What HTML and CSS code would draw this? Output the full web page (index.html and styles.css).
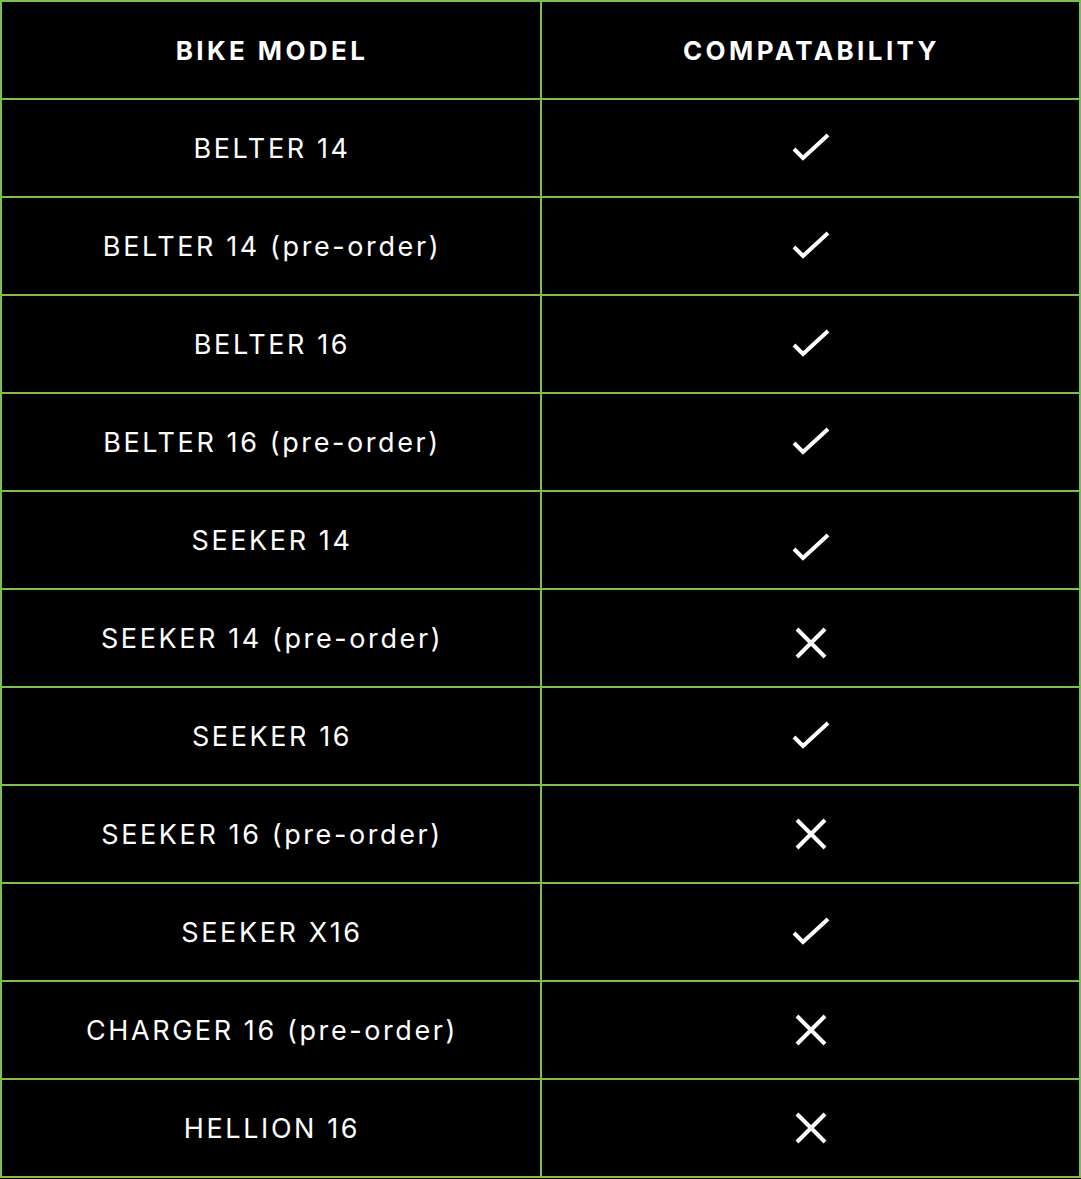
FILE: index.html
```html
<!DOCTYPE html>
<html lang="en">
<head>
<meta charset="utf-8">
<title>Bike compatibility</title>
<link rel="stylesheet" href="styles.css">
</head>
<body>
<div class="table">
  <div class="cell head">BIKE MODEL</div>
  <div class="cell head">COMPATABILITY</div>

  <div class="cell">BELTER 14</div>
  <div class="cell"><svg class="icon check" viewBox="0 0 38 30"><polyline points="2,16 11,25 36,2"/></svg></div>

  <div class="cell">BELTER 14 (pre-order)</div>
  <div class="cell"><svg class="icon check" viewBox="0 0 38 30"><polyline points="2,16 11,25 36,2"/></svg></div>

  <div class="cell">BELTER 16</div>
  <div class="cell"><svg class="icon check" viewBox="0 0 38 30"><polyline points="2,16 11,25 36,2"/></svg></div>

  <div class="cell">BELTER 16 (pre-order)</div>
  <div class="cell"><svg class="icon check" viewBox="0 0 38 30"><polyline points="2,16 11,25 36,2"/></svg></div>

  <div class="cell">SEEKER 14</div>
  <div class="cell"><svg class="icon check low" viewBox="0 0 38 30"><polyline points="2,16 11,25 36,2"/></svg></div>

  <div class="cell">SEEKER 14 (pre-order)</div>
  <div class="cell"><svg class="icon cross low-x" viewBox="0 0 32 32"><path d="M2 2L30 30M30 2L2 30"/></svg></div>

  <div class="cell">SEEKER 16</div>
  <div class="cell"><svg class="icon check" viewBox="0 0 38 30"><polyline points="2,16 11,25 36,2"/></svg></div>

  <div class="cell">SEEKER 16 (pre-order)</div>
  <div class="cell"><svg class="icon cross" viewBox="0 0 32 32"><path d="M2 2L30 30M30 2L2 30"/></svg></div>

  <div class="cell">SEEKER X16</div>
  <div class="cell"><svg class="icon check" viewBox="0 0 38 30"><polyline points="2,16 11,25 36,2"/></svg></div>

  <div class="cell">CHARGER 16 (pre-order)</div>
  <div class="cell"><svg class="icon cross" viewBox="0 0 32 32"><path d="M2 2L30 30M30 2L2 30"/></svg></div>

  <div class="cell">HELLION 16</div>
  <div class="cell"><svg class="icon cross" viewBox="0 0 32 32"><path d="M2 2L30 30M30 2L2 30"/></svg></div>
</div>
</body>
</html>
```
FILE: styles.css
```css
html, body {
  margin: 0;
  padding: 0;
  background: #000;
}

.table {
  display: grid;
  grid-template-columns: 538px 537px;
  grid-auto-rows: 96px;
  gap: 2px;
  padding: 2px;
  width: 1081px;
  box-sizing: border-box;
  background: #7fbd4e;
}

.cell {
  background: #000;
  color: #fff;
  display: flex;
  align-items: center;
  justify-content: center;
  font-family: Inter, "Liberation Sans", sans-serif;
  font-size: 27px;
  font-weight: 400;
  letter-spacing: 2.6px;
  padding-left: 2px;
}

.head {
  font-weight: 700;
  letter-spacing: 3.4px;
  font-size: 26px;
}

.icon {
  fill: none;
  stroke: #fff;
  stroke-width: 4;
  stroke-linecap: butt;
}

.check {
  width: 38px;
  height: 30px;
  margin-right: 2px;
}

.cross {
  width: 32px;
  height: 32px;
  margin-right: 2px;
}

.low {
  margin-top: 16px;
}

.low-x {
  margin-top: 10px;
}
```
